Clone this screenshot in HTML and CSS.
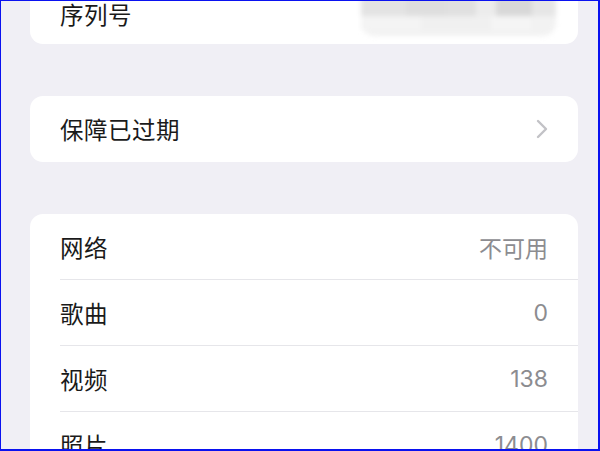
FILE: index.html
```html
<!DOCTYPE html>
<html lang="zh-CN">
<head>
  <meta charset="UTF-8">
  <title>关于本机</title>
  <link rel="stylesheet" href="styles.css">
</head>
<body>
  <div class="frame">
    <div class="card card-top">
      <div class="row row-serial">
        <span class="label">序列号</span>
        <div class="masked">
          <span class="blk b1"></span><span class="blk b2"></span><span class="blk b3"></span><span class="blk b4"></span><span class="blk b5"></span><span class="blk b6"></span>
          <span class="blk c1"></span><span class="blk c2"></span><span class="blk c3"></span>
        </div>
      </div>
    </div>

    <div class="card">
      <div class="row">
        <span class="label">保障已过期</span>
        <svg class="chev" width="12" height="20" viewBox="0 0 12 20">
          <polyline points="2,2 10,10 2,18" fill="none" stroke="#c2c2c6" stroke-width="2.4" stroke-linecap="round" stroke-linejoin="round"/>
        </svg>
      </div>
    </div>

    <div class="card">
      <div class="row line">
        <span class="label">网络</span>
        <span class="value">不可用</span>
      </div>
      <div class="row line">
        <span class="label">歌曲</span>
        <span class="value">0</span>
      </div>
      <div class="row line">
        <span class="label">视频</span>
        <span class="value">138</span>
      </div>
      <div class="row">
        <span class="label">照片</span>
        <span class="value">1400</span>
      </div>
    </div>
  </div>
</body>
</html>
```

FILE: styles.css
```css
body{
  margin:0;
  font-family:Inter, "Noto Sans CJK SC", sans-serif;
}
.frame{
  box-sizing:border-box;
  width:600px;
  height:451px;
  overflow:hidden;
  background-color:#f0eff5;
  border-style:solid;
  border-color:#0a12f0;
  border-width:1px 2px 2px 1px;
}
.card{
  background-color:#fff;
  border-radius:13px;
  margin:0 20px 52px 29px;
}
.card-top{
  margin-top:-23px;
}
.row{
  height:66px;
  display:flex;
  align-items:center;
  justify-content:space-between;
  margin-left:30px;
  padding-right:30px;
}
.row-serial{
  box-sizing:border-box;
  padding-top:6px;
}
.line{
  height:65px;
  border-bottom:1px solid #e6e6ea;
}
.label{
  font-size:23.5px;
  color:#1a1a1a;
  letter-spacing:0.5px;
}
.value{
  font-size:23px;
  color:#8c8c90;
}
.masked{
  display:flex;
  flex-wrap:wrap;
  align-content:flex-start;
  width:195px;
  height:40px;
  margin-top:4px;
  margin-right:-8px;
  filter:blur(2.5px);
  border-radius:14px;
  background-color:#f2f2f2;
}
.blk{
  height:20px;
}
.b1{ width:45px; background-color:#e3e3e3; }
.b2{ width:40px; background-color:#dedede; }
.b3{ width:30px; background-color:#e0e0e0; }
.b4{ width:20px; background-color:#ececec; }
.b5{ width:36px; background-color:#d8d8d8; }
.b6{ width:24px; background-color:#e6e6e6; }
.c1{ width:60px; height:14px; background-color:#f4f4f4; }
.c2{ width:70px; height:14px; background-color:#f0f0f0; }
.c3{ width:40px; height:14px; background-color:#f5f5f5; }
```
